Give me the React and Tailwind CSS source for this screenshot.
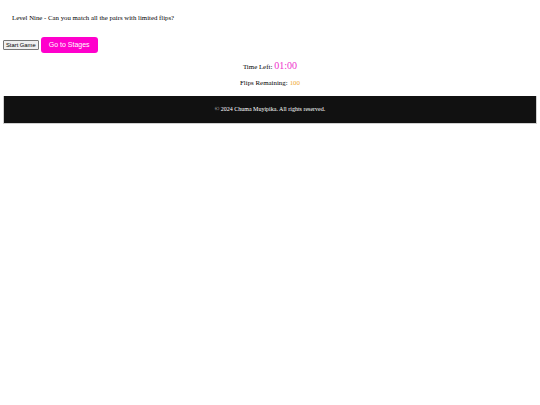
export default function App() {
  return (
    <div className="bg-white min-h-[405px] font-['Liberation_Serif',serif] text-black">
      <div className="px-[12px] pt-[13px] text-[6.8px] leading-[10px]">
        Level Nine - Can you match all the pairs with limited flips?
      </div>

      <div className="flex items-center gap-[2px] pl-[3px] mt-[14px]">
        <button className="font-['Liberation_Sans',sans-serif] text-[5.8px] leading-[7px] px-[2px] py-[0.5px] bg-[#efefef] border border-[#767676] rounded-[1px]">
          Start Game
        </button>
        <button className="font-['Liberation_Sans',sans-serif] text-[7px] leading-[8px] text-white bg-[#ff00cc] rounded-[3px] w-[57px] h-[16px]">
          Go to Stages
        </button>
      </div>

      <div className="flex flex-col items-center mt-[6px]">
        <div className="text-[6.9px] leading-[14px] h-[14px] flex items-baseline gap-[2px]">
          <span>Time Left:</span>
          <span className="text-[10px] text-[#ee33cc]">01:00</span>
        </div>
        <div className="text-[6.9px] leading-[10px] mt-[5px] flex items-baseline gap-[2px]">
          <span>Flips Remaining:</span>
          <span className="text-[#f0a830]">100</span>
        </div>
      </div>

      <footer className="mx-[3px] mt-[8px] h-[28px] bg-[#111111] border-l border-r border-b border-[#cfcfcf] flex items-center justify-center text-white text-[6px]">
        © 2024 Chuma Muyipika. All rights reserved.
      </footer>
    </div>
  );
}
